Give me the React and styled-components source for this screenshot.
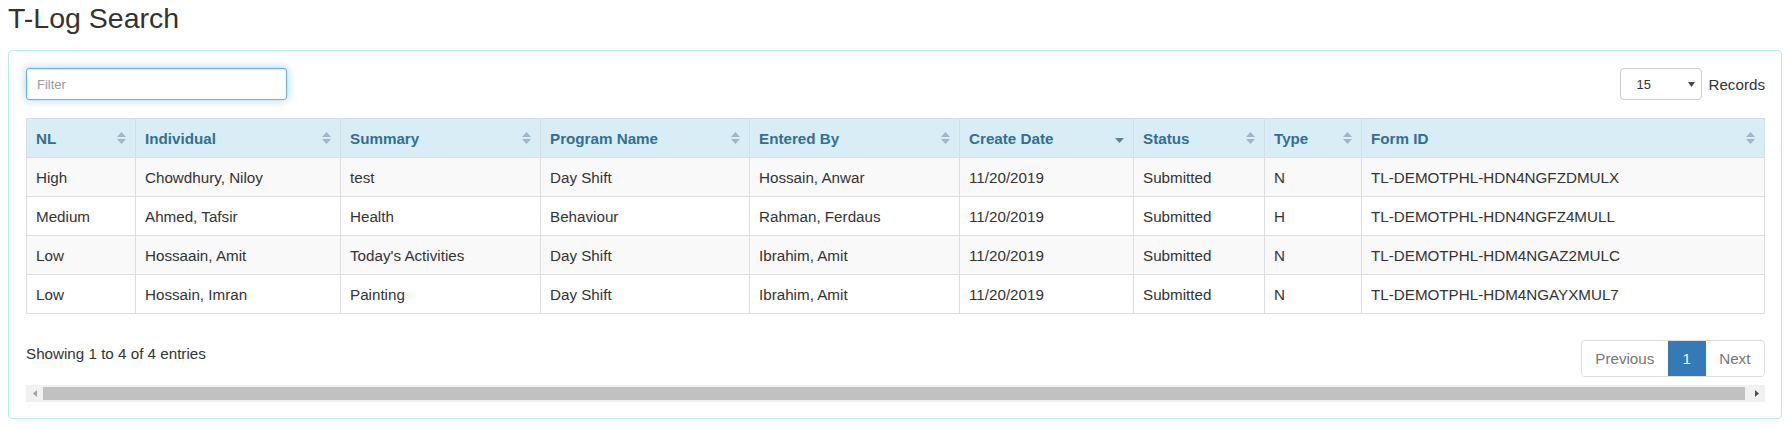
import React from "react";
import styled, { createGlobalStyle } from "styled-components";

const rows = [
  ["High", "Chowdhury, Niloy", "test", "Day Shift", "Hossain, Anwar", "11/20/2019", "Submitted", "N", "TL-DEMOTPHL-HDN4NGFZDMULX"],
  ["Medium", "Ahmed, Tafsir", "Health", "Behaviour", "Rahman, Ferdaus", "11/20/2019", "Submitted", "H", "TL-DEMOTPHL-HDN4NGFZ4MULL"],
  ["Low", "Hossaain, Amit", "Today's Activities", "Day Shift", "Ibrahim, Amit", "11/20/2019", "Submitted", "N", "TL-DEMOTPHL-HDM4NGAZ2MULC"],
  ["Low", "Hossain, Imran", "Painting", "Day Shift", "Ibrahim, Amit", "11/20/2019", "Submitted", "N", "TL-DEMOTPHL-HDM4NGAYXMUL7"],
];

const columns = [
  { label: "NL", width: 109 },
  { label: "Individual", width: 205 },
  { label: "Summary", width: 200 },
  { label: "Program Name", width: 209 },
  { label: "Entered By", width: 210 },
  { label: "Create Date", width: 174, sorted: true },
  { label: "Status", width: 131 },
  { label: "Type", width: 97 },
  { label: "Form ID" },
];

const App = () => {
  return (
    <Page>
      <GlobalStyle />
      <Title>T-Log Search</Title>
      <Card>
        <TopBar>
          <FilterInput placeholder="Filter" />
          <RecordsWrap>
            <SelectBox>
              <Select defaultValue="15">
                <option value="15">15</option>
                <option value="25">25</option>
                <option value="50">50</option>
              </Select>
              <SelectArrow width="7" height="5" viewBox="0 0 7 5">
                <polygon points="0,0 7,0 3.5,5" fill="#444" />
              </SelectArrow>
            </SelectBox>
            <RecordsLabel>Records</RecordsLabel>
          </RecordsWrap>
        </TopBar>

        <Table>
          <colgroup>
            {columns.map((c) => (
              <col key={c.label} style={c.width ? { width: c.width } : undefined} />
            ))}
          </colgroup>
          <thead>
            <tr>
              {columns.map((c) => (
                <Th key={c.label}>
                  <HeadInner>
                    <span>{c.label}</span>
                    {c.sorted ? (
                      <SortDown width="9" height="5" viewBox="0 0 9 5">
                        <polygon points="0,0 9,0 4.5,5" fill="#5f8198" />
                      </SortDown>
                    ) : (
                      <svg width="9" height="12" viewBox="0 0 9 12">
                        <polygon points="0,5 4.5,0 9,5" fill="#9fb6c6" />
                        <polygon points="0,7 9,7 4.5,12" fill="#9fb6c6" />
                      </svg>
                    )}
                  </HeadInner>
                </Th>
              ))}
            </tr>
          </thead>
          <tbody>
            {rows.map((r, i) => (
              <Tr key={i} striped={i % 2 === 0}>
                {r.map((cell, j) => (
                  <Td key={j}>{cell}</Td>
                ))}
              </Tr>
            ))}
          </tbody>
        </Table>

        <Footer>
          <Info>Showing 1 to 4 of 4 entries</Info>
          <Pagination>
            <PageItem>Previous</PageItem>
            <PageItem active>1</PageItem>
            <PageItem>Next</PageItem>
          </Pagination>
        </Footer>

        <ScrollBar>
          <ScrollButton>
            <svg width="4" height="7" viewBox="0 0 4 7">
              <polygon points="4,0 4,7 0,3.5" fill="#a3a3a3" />
            </svg>
          </ScrollButton>
          <Thumb />
          <ScrollButton>
            <svg width="4" height="7" viewBox="0 0 4 7">
              <polygon points="0,0 0,7 4,3.5" fill="#505050" />
            </svg>
          </ScrollButton>
        </ScrollBar>
      </Card>
    </Page>
  );
};

const GlobalStyle = createGlobalStyle`
  body {
    margin: 0;
    background: #ffffff;
    color: #333333;
    font-family: "Liberation Sans", Arial, sans-serif;
    font-size: 15.2px;
  }
  * { box-sizing: border-box; }
`;

const Page = styled.div`
  padding: 0 9px 0 8px;
`;

const Title = styled.h3`
  margin: 0;
  font-size: 28.5px;
  line-height: 36px;
  font-weight: normal;
  color: #333;
`;

const Card = styled.div`
  margin-top: 14px;
  border: 1px solid #bce8f1;
  border-radius: 4px;
  padding: 17px 16px 16px 17px;
`;

const TopBar = styled.div`
  display: flex;
  justify-content: space-between;
  align-items: center;
  height: 32px;
`;

const FilterInput = styled.input`
  width: 261px;
  height: 32px;
  border: 1px solid #66afe9;
  border-radius: 3px;
  padding: 0 10px;
  font-family: "Liberation Sans", Arial, sans-serif;
  font-size: 13px;
  color: #555;
  outline: none;
  box-shadow: inset 0 1px 1px rgba(0, 0, 0, 0.075), 0 0 8px rgba(102, 175, 233, 0.6);
  &::placeholder {
    color: #999;
  }
`;

const RecordsWrap = styled.div`
  display: flex;
  align-items: center;
  gap: 6px;
`;

const SelectBox = styled.div`
  position: relative;
  width: 82px;
  height: 32px;
`;

const Select = styled.select`
  appearance: none;
  width: 100%;
  height: 100%;
  border: 1px solid #ccc;
  border-radius: 4px;
  background: #fff;
  padding: 0 0 0 15px;
  font-family: "Liberation Sans", Arial, sans-serif;
  font-size: 13px;
  color: #333;
`;

const SelectArrow = styled.svg`
  position: absolute;
  right: 7px;
  top: 14px;
  pointer-events: none;
`;

const RecordsLabel = styled.span`
  font-size: 15.2px;
`;

const Table = styled.table`
  margin-top: 18px;
  width: 100%;
  table-layout: fixed;
  border-collapse: collapse;
  border: 1px solid #ddd;
`;

const Th = styled.th`
  height: 39px;
  padding: 0 9px;
  background: #d9edf7;
  color: #31708f;
  font-weight: bold;
  text-align: left;
  border: 1px solid #d3dfe6;
  border-bottom-color: #dddddd;
`;

const HeadInner = styled.div`
  display: flex;
  justify-content: space-between;
  align-items: center;
  padding-right: 0;
`;

const SortDown = styled.svg`
  margin-top: 5px;
`;

const Tr = styled.tr`
  background: ${(p) => (p.striped ? "#f9f9f9" : "#ffffff")};
`;

const Td = styled.td`
  height: 39px;
  padding: 0 9px;
  border: 1px solid #ddd;
  white-space: nowrap;
  overflow: hidden;
`;

const Footer = styled.div`
  margin-top: 26px;
  display: flex;
  justify-content: space-between;
  align-items: flex-start;
`;

const Info = styled.div`
  padding-top: 4px;
  line-height: 20px;
`;

const Pagination = styled.div`
  display: flex;
  height: 36.5px;
  border: 1px solid #ddd;
  border-radius: 4px;
  overflow: hidden;
`;

const PageItem = styled.div`
  display: flex;
  align-items: center;
  padding: 0 13.6px;
  color: ${(p) => (p.active ? "#ffffff" : "#777777")};
  background: ${(p) => (p.active ? "#337ab7" : "#ffffff")};
  & + & {
    border-left: 1px solid ${(p) => (p.active ? "#337ab7" : "#ddd")};
  }
`;

const ScrollBar = styled.div`
  margin-top: 8.5px;
  height: 17px;
  display: flex;
  align-items: center;
  background: #f1f1f1;
`;

const ScrollButton = styled.div`
  width: 17px;
  height: 17px;
  flex: none;
  display: flex;
  align-items: center;
  justify-content: center;
`;

const Thumb = styled.div`
  flex: 1;
  height: 13px;
  background: #c1c1c1;
  margin-right: 3px;
`;

export default App;
